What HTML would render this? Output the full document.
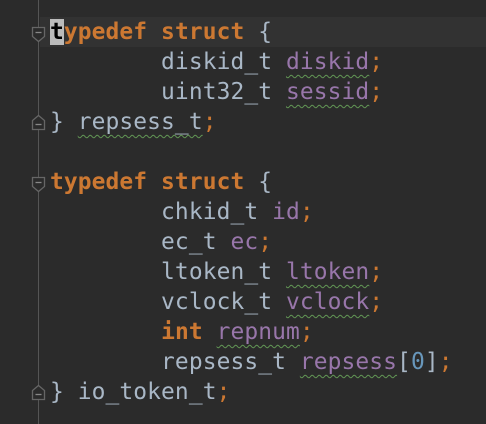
<!DOCTYPE html>
<html><head><style>
html,body{margin:0;padding:0;background:#2b2b2b;width:486px;height:424px;overflow:hidden}
.cur{position:absolute;left:40px;top:17px;width:446px;height:30px;background:#323232}
.gl{position:absolute;left:38px;top:0;width:1px;height:424px;background:#555}
pre{position:absolute;left:50px;top:17px;margin:0;font-family:"DejaVu Sans Mono","Liberation Mono",monospace;font-size:22.9px;line-height:30px;color:#a9b7c6;letter-spacing:0.1px}
.k{color:#cc7832;font-weight:bold}.s{color:#cc7832}.p{color:#9876aa}.n{color:#6897bb}
.w{text-decoration:underline wavy #629755;text-decoration-thickness:1px;text-underline-offset:5px;text-decoration-skip-ink:none}
.c{background:#bbbbbb;color:#000}
.f{position:absolute;left:31px;width:15px;height:17px}
</style></head><body>
<div class="cur"></div><div class="gl"></div>
<svg class="f" style="top:26px" viewBox="0 0 15 17"><path d="M1.5 1.5H13.5V10.5L7.5 15.5L1.5 10.5Z" fill="#2b2b2b" stroke="#666" stroke-width="1.3"/><path d="M4.5 6.5H10.5" stroke="#888" stroke-width="1.3"/></svg>
<svg class="f" style="top:114px" viewBox="0 0 15 17"><path d="M1.5 15.5H13.5V6.5L7.5 1.5L1.5 6.5Z" fill="#2b2b2b" stroke="#666" stroke-width="1.3"/><path d="M4.5 10.5H10.5" stroke="#888" stroke-width="1.3"/></svg>
<svg class="f" style="top:176px" viewBox="0 0 15 17"><path d="M1.5 1.5H13.5V10.5L7.5 15.5L1.5 10.5Z" fill="#2b2b2b" stroke="#666" stroke-width="1.3"/><path d="M4.5 6.5H10.5" stroke="#888" stroke-width="1.3"/></svg>
<svg class="f" style="top:384px" viewBox="0 0 15 17"><path d="M1.5 15.5H13.5V6.5L7.5 1.5L1.5 6.5Z" fill="#2b2b2b" stroke="#666" stroke-width="1.3"/><path d="M4.5 10.5H10.5" stroke="#888" stroke-width="1.3"/></svg>
<pre><span class="k"><span class="c">t</span>ypedef struct</span> {
        diskid_t <span class="p w">diskid</span><span class="s">;</span>
        uint32_t <span class="p w">sessid</span><span class="s">;</span>
} <span class="w">repsess_t</span><span class="s">;</span>

<span class="k">typedef struct</span> {
        chkid_t <span class="p">id</span><span class="s">;</span>
        ec_t <span class="p">ec</span><span class="s">;</span>
        ltoken_t <span class="p w">ltoken</span><span class="s">;</span>
        vclock_t <span class="p w">vclock</span><span class="s">;</span>
        <span class="k">int</span> <span class="p w">repnum</span><span class="s">;</span>
        repsess_t <span class="p w">repsess</span>[<span class="n">0</span>]<span class="s">;</span>
} io_token_t<span class="s">;</span></pre>
</body></html>
